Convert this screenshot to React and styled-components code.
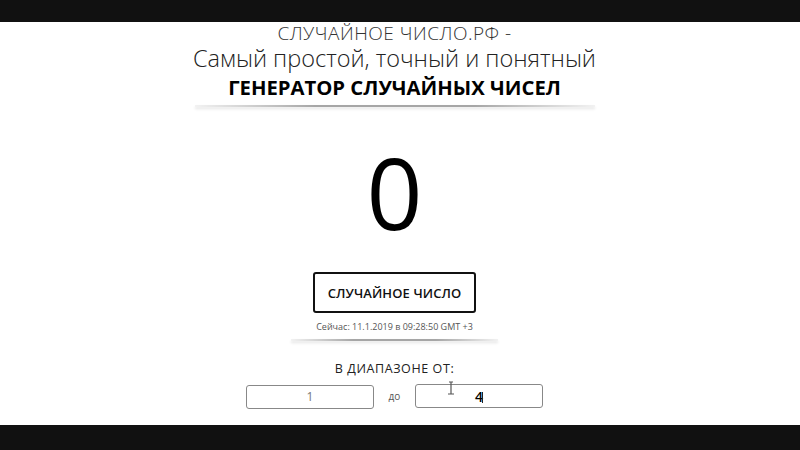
import React from "react";
import styled, { createGlobalStyle } from "styled-components";

const GlobalStyle = createGlobalStyle`
  html, body {
    margin: 0;
    padding: 0;
    background: #111;
  }
  body {
    font-family: "Open Sans", "Noto Sans", sans-serif;
  }
`;

const Screen = styled.div`
  width: 800px;
  height: 450px;
  padding-top: 22px;
  box-sizing: border-box;
  background: #111;
`;

const Page = styled.main`
  height: 403px;
  padding-right: 11px;
  background: #fff;
  display: flex;
  flex-direction: column;
  align-items: center;
`;

const Header = styled.header`
  display: flex;
  flex-direction: column;
  align-items: center;
  color: #222;
`;

const SiteName = styled.div`
  font-size: 19px;
  font-weight: 300;
  letter-spacing: 0.5px;
  line-height: 23px;
  color: #333;
`;

const Tagline = styled.div`
  font-size: 23.5px;
  font-weight: 300;
  line-height: 26px;
  color: #222;
`;

const Title = styled.h1`
  margin: 0;
  font-size: 20.3px;
  font-weight: 700;
  line-height: 32px;
  color: #000;
`;

const Divider = styled.div`
  width: ${p => p.width}px;
  height: 2px;
  margin-top: ${p => p.top}px;
  background: linear-gradient(to right, rgba(0,0,0,0.05), rgba(0,0,0,0.35) 30%, rgba(0,0,0,0.35) 70%, rgba(0,0,0,0.05));
  box-shadow: 0 2px 3px rgba(0,0,0,0.12);
`;

const Result = styled.div`
  margin-top: 25px;
  font-size: 98px;
  line-height: 120px;
  font-weight: 400;
  color: #000;
`;

const GenerateButton = styled.button`
  margin-top: 20px;
  width: 163px;
  height: 41px;
  border: 2px solid #111;
  border-radius: 3px;
  background: #fff;
  font-family: inherit;
  font-size: 13px;
  font-weight: 600;
  color: #111;
  letter-spacing: 0.1px;
  cursor: pointer;
`;

const Now = styled.div`
  margin-top: 8px;
  font-size: 9px;
  line-height: 12px;
  color: #555;
`;

const RangeLabel = styled.div`
  margin-top: 19px;
  font-size: 12.5px;
  line-height: 17px;
  letter-spacing: 0.6px;
  color: #222;
`;

const RangeRow = styled.div`
  margin-top: 7px;
  display: flex;
  align-items: center;
`;

const Field = styled.div`
  position: relative;
  width: 128px;
  height: 24px;
`;

const NumberInput = styled.input`
  width: 100%;
  height: 100%;
  box-sizing: border-box;
  border: 1px solid #888;
  border-radius: 3px;
  text-align: center;
  font-family: inherit;
  font-size: ${p => (p.active ? "14px" : "12px")};
  color: ${p => (p.active ? "#000" : "#777")};
  font-weight: ${p => (p.active ? 600 : 400)};
  outline: none;
  padding: 0;
  caret-color: transparent;
`;

const Caret = styled.span`
  position: absolute;
  left: 67px;
  top: 8px;
  width: 1px;
  height: 11px;
  background: #222;
  pointer-events: none;
`;

const Pointer = styled.svg`
  position: absolute;
  left: 32px;
  top: -3px;
  pointer-events: none;
`;

const Joiner = styled.span`
  width: 41px;
  text-align: center;
  font-size: 10px;
  color: #555;
`;

export default function App() {
  return (
    <Screen>
      <GlobalStyle />
      <Page>
        <Header>
          <SiteName>СЛУЧАЙНОЕ ЧИСЛО.РФ -</SiteName>
          <Tagline>Самый простой, точный и понятный</Tagline>
          <Title>ГЕНЕРАТОР СЛУЧАЙНЫХ ЧИСЕЛ</Title>
        </Header>
        <Divider width={400} top={2} />
        <Result>0</Result>
        <GenerateButton>СЛУЧАЙНОЕ ЧИСЛО</GenerateButton>
        <Now>Сейчас: 11.1.2019 в 09:28:50 GMT +3</Now>
        <Divider width={207} top={6} />
        <RangeLabel>В ДИАПАЗОНЕ ОТ:</RangeLabel>
        <RangeRow>
          <Field>
            <NumberInput defaultValue="1" />
          </Field>
          <Joiner>до</Joiner>
          <Field>
            <NumberInput active defaultValue="4" />
            <Caret />
            <Pointer width="8" height="15" viewBox="0 0 8 15">
              <path d="M2 1h4M4 1v12M1 13h6" stroke="#555" strokeWidth="1.2" fill="none" />
            </Pointer>
          </Field>
        </RangeRow>
      </Page>
    </Screen>
  );
}
